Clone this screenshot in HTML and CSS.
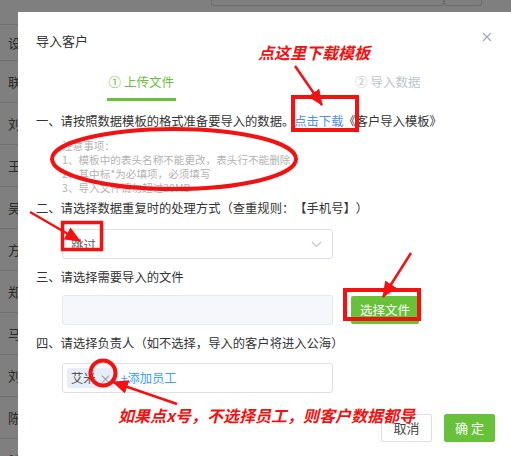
FILE: index.html
```html
<!DOCTYPE html>
<html lang="zh-CN">
<head>
  <meta charset="UTF-8">
  <meta name="viewport" content="width=device-width, initial-scale=1.0">
  <title>导入客户</title>
  <link rel="stylesheet" href="styles.css">
</head>
<body>

<div class="page">
  <div class="topbar">
    <div class="tool wide"></div>
    <div class="tool"></div>
  </div>
  <div class="row head">设置</div>
  <div class="row">联系人</div>
  <div class="row">刘强</div>
  <div class="row">王芳</div>
  <div class="row">吴敏</div>
  <div class="row">方涛</div>
  <div class="row">郑磊</div>
  <div class="row">马丽</div>
  <div class="row">刘洋</div>
  <div class="row">陈静</div>
  <div class="row">18812345678</div>
</div>

<div class="dialog">
  <div class="dialog-header">
    <span class="dialog-title">导入客户</span>
    <svg class="close" width="10" height="10" viewBox="0 0 10 10">
      <path d="M1 1 L9 9 M9 1 L1 9" stroke="#a3a8b8" stroke-width="1.2" fill="none"/>
    </svg>
  </div>

  <div class="steps">
    <div class="step"><span class="step-label active">① 上传文件</span></div>
    <div class="step"><span class="step-label">② 导入数据</span></div>
  </div>

  <div class="dialog-body">
    <div class="line first">一、请按照数据模板的格式准备要导入的数据。<span class="link">点击下载</span>《客户导入模板》</div>
    <div class="notes">
      <div>注意事项：</div>
      <div>1、模板中的表头名称不能更改，表头行不能删除</div>
      <div>2、其中标*为必填项，必须填写</div>
      <div>3、导入文件请勿超过20MB</div>
    </div>

    <div class="line second">二、请选择数据重复时的处理方式（查重规则：【手机号】）</div>
    <div class="select">
      <span>跳过</span>
      <svg width="11" height="7" viewBox="0 0 11 7">
        <path d="M1 1 L5.5 5.5 L10 1" stroke="#c0c4cc" stroke-width="1.1" fill="none"/>
      </svg>
    </div>

    <div class="line">三、请选择需要导入的文件</div>
    <div class="file-row">
      <div class="file-box"></div>
      <div class="btn-file">选择文件</div>
    </div>

    <div class="line">四、请选择负责人（如不选择，导入的客户将进入公海）</div>
    <div class="tag-box">
      <span class="tag">艾米<span class="tag-x">×</span></span>
      <span class="add">+添加员工</span>
    </div>
  </div>

  <div class="dialog-footer">
    <div class="btn btn-cancel">取消</div>
    <div class="btn btn-ok">确 定</div>
  </div>
</div>

<div class="annot">
  <svg width="511" height="456" viewBox="0 0 511 456">
    <defs>
      <marker id="head" markerUnits="userSpaceOnUse" markerWidth="16" markerHeight="14" refX="15" refY="7" orient="auto">
        <path d="M0 0 L16 7 L0 14 Z" fill="#f21212"/>
      </marker>
    </defs>
    <g stroke="#f21212" fill="none">
      <rect x="293" y="97" width="64" height="33" stroke-width="4"/>
      <ellipse cx="174" cy="159" rx="122" ry="30" stroke-width="4"/>
      <rect x="62.5" y="222.5" width="39" height="27" stroke-width="3.5"/>
      <rect x="345" y="290" width="74" height="29" stroke-width="4"/>
      <circle cx="103" cy="373" r="12.5" stroke-width="4"/>
      <line x1="295" y1="66" x2="322" y2="105" stroke-width="2.5" marker-end="url(#head)"/>
      <line x1="30" y1="212" x2="80" y2="241" stroke-width="2.5" marker-end="url(#head)"/>
      <line x1="411" y1="253" x2="383" y2="297" stroke-width="2.5" marker-end="url(#head)"/>
      <line x1="177" y1="404" x2="113" y2="382" stroke-width="2.5" marker-end="url(#head)"/>
    </g>
  </svg>
  <span class="note-text top">点这里下载模板</span>
  <span class="note-text bottom">如果点x号，不选择员工，则客户数据都导</span>
</div>

</body>
</html>
```

FILE: styles.css
```css
body { margin: 0; width: 511px; height: 456px; overflow: hidden; background: #7f7f7f; font-family: "Noto Sans CJK SC", "Noto Sans", sans-serif; text-spacing-trim: space-all; }

.page { width: 511px; }
.topbar { height: 24px; display: flex; justify-content: flex-end; padding-right: 29px; }
.tool { width: 36px; height: 5px; border: 1px solid #6c6c6c; border-top: none; border-radius: 0 0 3px 3px; }
.tool.wide { width: 231px; }
.row { height: 41px; line-height: 41px; border-top: 1px solid #717171; padding-left: 8px; font-size: 13px; color: #2b2b2b; white-space: nowrap; }
.row.head { height: 35px; line-height: 35px; }

.dialog { position: absolute; left: 18px; top: 12px; width: 493px; height: 460px; background: #fff; color: #3a3a3a; }
.dialog-header { display: flex; justify-content: space-between; align-items: flex-start; padding: 20px 19px 0 18px; }
.dialog-title { font-size: 13px; line-height: 18px; color: #333; }
.close { display: block; }

.steps { display: flex; margin-top: 18px; }
.step { flex: 1; text-align: center; }
.step-label { display: inline-block; font-size: 12.5px; line-height: 18px; padding: 0 2px 7px; color: #c0c4cc; border-bottom: 3px solid transparent; }
.step-label.active { color: #67c23a; border-bottom-color: #67c23a; }

.dialog-body { padding: 0 18px; }
.line { font-size: 12.3px; line-height: 18px; color: #333; white-space: nowrap; margin-top: 9px; }
.line.first { margin-top: 11px; }
.line.second { margin-top: 4px; }
.link { color: #4f8cf0; }

.notes { margin: 9px 0 0 26px; font-size: 10.6px; line-height: 14px; color: #b3b3b3; }

.select { box-sizing: border-box; width: 271px; height: 30px; margin: 12px 0 0 26px; padding: 0 10px 0 8px; border: 1px solid #dcdfe6; border-radius: 3px; display: flex; align-items: center; justify-content: space-between; font-size: 12.5px; color: #606266; }
.select svg { display: block; }

.file-row { display: flex; align-items: center; margin: 9px 0 0 26px; }
.file-box { box-sizing: border-box; width: 271px; height: 30px; background: #f5f7fa; border: 1px solid #e4e7ed; border-radius: 3px; }
.btn-file { width: 68px; height: 28px; line-height: 28px; margin-left: 18px; background: #67c23a; color: #fff; text-align: center; font-size: 12.5px; border-radius: 2px; }

.tag-box { box-sizing: border-box; width: 271px; height: 30px; margin: 11px 0 0 26px; padding-left: 4px; border: 1px solid #dcdfe6; border-radius: 3px; display: flex; align-items: center; font-size: 12.3px; }
.tag { display: flex; align-items: center; height: 20px; padding: 0 4px; background: #e7eef9; color: #555; border-radius: 2px; }
.tag-x { margin-left: 4px; color: #909399; font-size: 12px; }
.add { margin-left: 5px; color: #409eff; }

.dialog-footer { display: flex; justify-content: flex-end; gap: 12px; padding-right: 16px; margin-top: 21px; }
.btn { box-sizing: border-box; width: 51px; height: 28px; line-height: 26px; text-align: center; font-size: 13px; border-radius: 2px; }
.btn-cancel { border: 1px solid #dcdfe6; color: #444; }
.btn-ok { border: 1px solid #67c23a; background: #67c23a; color: #fff; }

.annot { position: absolute; left: 0; top: 0; width: 511px; height: 456px; pointer-events: none; }
.annot svg { display: block; }
.note-text { position: absolute; font-size: 16px; line-height: 20px; font-weight: 700; font-style: italic; color: #f21212; white-space: nowrap; }
.note-text.top { left: 258px; top: 42px; }
.note-text.bottom { left: 118px; top: 405px; }
```
